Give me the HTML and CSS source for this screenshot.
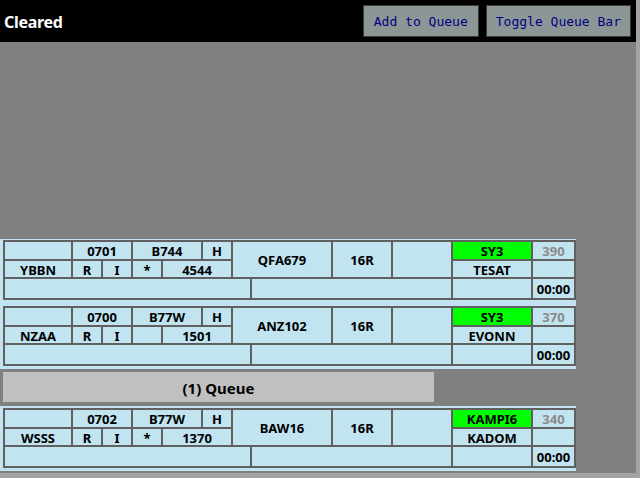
FILE: index.html
```html
<!DOCTYPE html>
<html>
<head>
<meta charset="utf-8">
<link rel="stylesheet" href="styles.css">
</head>
<body>
<div class="app">
  <div class="main">
    <header class="topbar">
      <div class="title">Cleared</div>
      <div class="actions">
        <button class="btn">Add to Queue</button>
        <button class="btn">Toggle Queue Bar</button>
      </div>
    </header>
    <div class="board">
      <div class="strip first">
        <div class="grid">
          <div class="cell c-b1"></div>
          <div class="cell c-dep">YBBN</div>
          <div class="cell c-time">0701</div>
          <div class="cell c-type">B744</div>
          <div class="cell c-wtc">H</div>
          <div class="cell c-rules">R</div>
          <div class="cell c-flt">I</div>
          <div class="cell c-star">*</div>
          <div class="cell c-ssr">4544</div>
          <div class="cell c-cs">QFA679</div>
          <div class="cell c-rwy">16R</div>
          <div class="cell c-b2"></div>
          <div class="cell c-sid">SY3</div>
          <div class="cell c-fix">TESAT</div>
          <div class="cell c-alt">390</div>
          <div class="cell c-b3"></div>
          <div class="cell c-r3a"></div>
          <div class="cell c-r3b"></div>
          <div class="cell c-r3c"></div>
          <div class="cell c-clock">00:00</div>
        </div>
      </div>
      <div class="strip">
        <div class="grid">
          <div class="cell c-b1"></div>
          <div class="cell c-dep">NZAA</div>
          <div class="cell c-time">0700</div>
          <div class="cell c-type">B77W</div>
          <div class="cell c-wtc">H</div>
          <div class="cell c-rules">R</div>
          <div class="cell c-flt">I</div>
          <div class="cell c-star"></div>
          <div class="cell c-ssr">1501</div>
          <div class="cell c-cs">ANZ102</div>
          <div class="cell c-rwy">16R</div>
          <div class="cell c-b2"></div>
          <div class="cell c-sid">SY3</div>
          <div class="cell c-fix">EVONN</div>
          <div class="cell c-alt">370</div>
          <div class="cell c-b3"></div>
          <div class="cell c-r3a"></div>
          <div class="cell c-r3b"></div>
          <div class="cell c-r3c"></div>
          <div class="cell c-clock">00:00</div>
        </div>
      </div>
      <div class="queue-wrap">
        <div class="queue">(1) Queue</div>
      </div>
      <div class="strip last">
        <div class="grid">
          <div class="cell c-b1"></div>
          <div class="cell c-dep">WSSS</div>
          <div class="cell c-time">0702</div>
          <div class="cell c-type">B77W</div>
          <div class="cell c-wtc">H</div>
          <div class="cell c-rules">R</div>
          <div class="cell c-flt">I</div>
          <div class="cell c-star">*</div>
          <div class="cell c-ssr">1370</div>
          <div class="cell c-cs">BAW16</div>
          <div class="cell c-rwy">16R</div>
          <div class="cell c-b2"></div>
          <div class="cell c-sid">KAMPI6</div>
          <div class="cell c-fix">KADOM</div>
          <div class="cell c-alt">340</div>
          <div class="cell c-b3"></div>
          <div class="cell c-r3a"></div>
          <div class="cell c-r3b"></div>
          <div class="cell c-r3c"></div>
          <div class="cell c-clock">00:00</div>
        </div>
      </div>
    </div>
    <div class="hbar"></div>
  </div>
  <div class="vbar"></div>
</div>
</body>
</html>
```

FILE: styles.css
```css
html, body {
  margin: 0;
  padding: 0;
  width: 640px;
  height: 478px;
  overflow: hidden;
  background: #808080;
}

.app {
  display: flex;
  width: 640px;
  height: 478px;
}

.main {
  flex: 1;
  display: flex;
  flex-direction: column;
  min-width: 0;
}

.vbar {
  width: 4px;
  background: #a2a4a2;
}

.topbar {
  height: 42px;
  background: #000;
  display: flex;
  align-items: center;
  justify-content: space-between;
  padding: 0 5px 0 4px;
}

.title {
  color: #fff;
  font-family: "Noto Sans", "Open Sans", sans-serif;
  font-weight: bold;
  font-size: 16px;
  letter-spacing: -0.3px;
  padding-top: 1px;
}

.actions {
  display: flex;
  gap: 7px;
  align-self: flex-start;
  margin-top: 5px;
}

.btn {
  height: 32px;
  min-width: 116px;
  margin: 0;
  padding: 0 9px;
  background: #8c9696;
  border: 1px solid #3a3a3a;
  color: #000080;
  font-family: "DejaVu Sans Mono", monospace;
  font-size: 13px;
}

.board {
  flex: 1;
  display: flex;
  flex-direction: column;
  justify-content: flex-end;
  padding-bottom: 2px;
}

.hbar {
  height: 5px;
  background: #a2a4a2;
}

.strip {
  width: max-content;
  background: #c1e4f0;
  padding: 3px 0 3px 3px;
}

.strip.first {
  padding-top: 1px;
}

.strip.last {
  padding-top: 2px;
}

.grid {
  display: grid;
  grid-template-columns: 66px 28px 28px 28px 38px 28px 17px 79px 58px 58px 78px 41px;
  grid-template-rows: 17px 16px 19px;
  gap: 2px;
  padding: 2px;
  background: #606060;
}

.cell {
  background: #c1e4f0;
  display: flex;
  align-items: center;
  justify-content: center;
  font-family: "Noto Sans", "Open Sans", sans-serif;
  font-weight: bold;
  font-size: 13px;
  line-height: 13px;
  padding-top: 2px;
  color: #000;
  white-space: nowrap;
}

.c-b1 { grid-column: 1; grid-row: 1; }
.c-dep { grid-column: 1; grid-row: 2; }
.c-time { grid-column: 2 / 4; grid-row: 1; }
.c-type { grid-column: 4 / 6; grid-row: 1; }
.c-wtc { grid-column: 6; grid-row: 1; }
.c-rules { grid-column: 2; grid-row: 2; }
.c-flt { grid-column: 3; grid-row: 2; }
.c-star { grid-column: 4; grid-row: 2; }
.c-ssr { grid-column: 5 / 7; grid-row: 2; }
.c-cs { grid-column: 7 / 9; grid-row: 1 / 3; }
.c-rwy { grid-column: 9; grid-row: 1 / 3; }
.c-b2 { grid-column: 10; grid-row: 1 / 3; }
.c-sid { grid-column: 11; grid-row: 1; background: #00ff00; }
.c-fix { grid-column: 11; grid-row: 2; }
.c-alt { grid-column: 12; grid-row: 1; color: #8a8a8a; }
.c-b3 { grid-column: 12; grid-row: 2; }
.c-r3a { grid-column: 1 / 8; grid-row: 3; }
.c-r3b { grid-column: 8 / 11; grid-row: 3; }
.c-r3c { grid-column: 11; grid-row: 3; }
.c-clock { grid-column: 12; grid-row: 3; }

.queue-wrap {
  padding: 3px 0 4px 3px;
}

.queue {
  width: 431px;
  height: 30px;
  background: #c0c0c0;
  display: flex;
  align-items: center;
  justify-content: center;
  font-family: "Noto Sans", "Open Sans", sans-serif;
  font-weight: bold;
  font-size: 15px;
  padding-top: 2px;
  box-sizing: border-box;
}
```
